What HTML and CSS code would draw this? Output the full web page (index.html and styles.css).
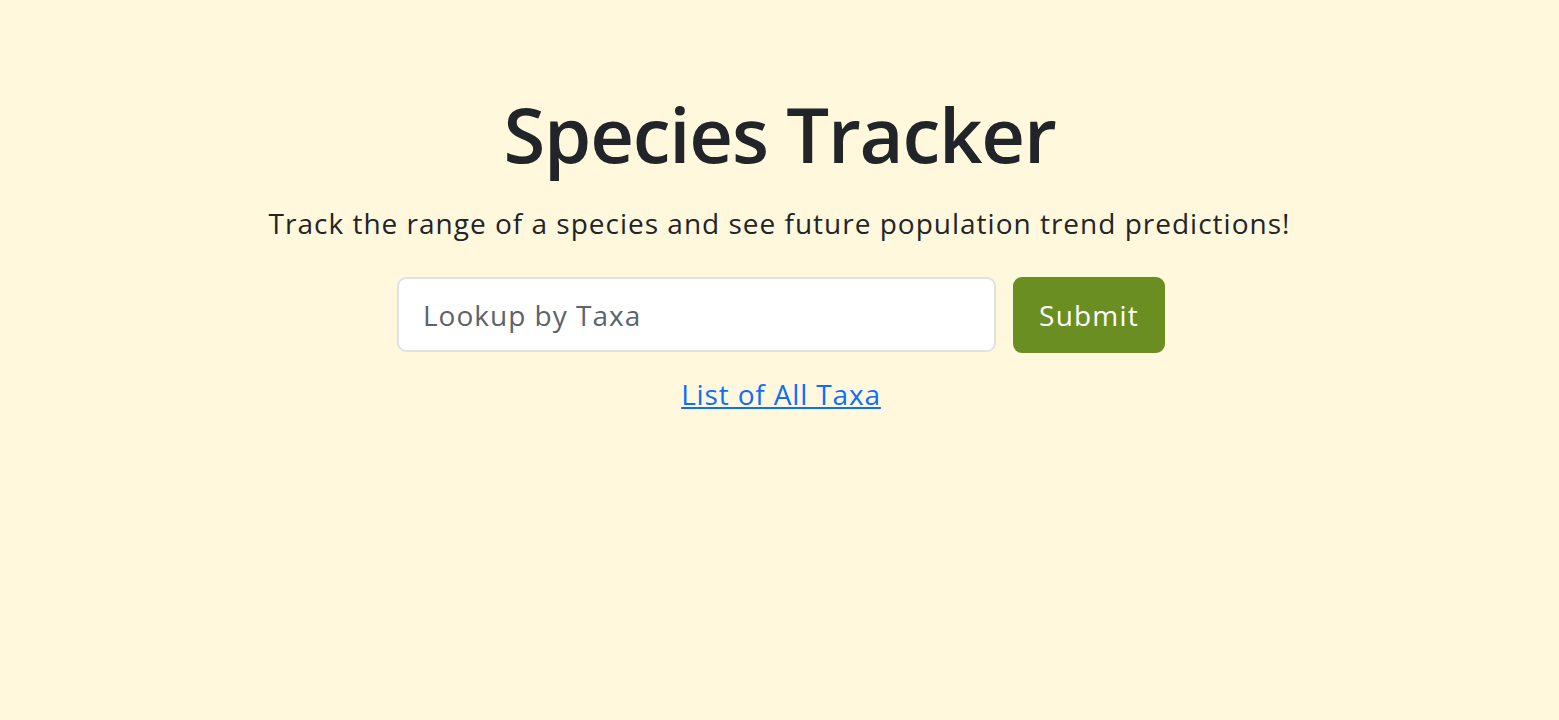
FILE: index.html
```html
<!DOCTYPE html>
<html lang="en">
<head>
<meta charset="utf-8">
<title>Species Tracker</title>
<link rel="stylesheet" href="styles.css">
</head>
<body>
<main class="hero">
  <h1 class="title">Species Tracker</h1>
  <p class="lead">Track the range of a species and see future population trend predictions!</p>
  <form class="search">
    <input class="search-input" type="text" placeholder="Lookup by Taxa">
    <button class="search-btn" type="button">Submit</button>
  </form>
  <a class="all-link" href="#">List of All Taxa</a>
</main>
</body>
</html>
```

FILE: styles.css
```css
html, body {
  margin: 0;
  padding: 0;
  background: #fff8dc;
  height: 100%;
}
body {
  font-family: "Open Sans", "Noto Sans", sans-serif;
  color: #212529;
}
.hero {
  display: flex;
  flex-direction: column;
  align-items: center;
  padding-top: 88px;
}
.title {
  margin: 0;
  font-size: 76px;
  font-weight: 600;
  line-height: 1.2;
  letter-spacing: -1.2px;
}
.lead {
  margin: 23px 0 0;
  font-size: 28px;
  line-height: 1.5;
  letter-spacing: 1px;
}
.search {
  display: flex;
  gap: 17px;
  margin-top: 33px;
  padding-left: 3px;
}
.search-input {
  box-sizing: border-box;
  width: 599px;
  height: 75px;
  padding: 0 24px;
  border: 2px solid #dee2e6;
  border-radius: 9px;
  background: #fff;
  font-family: inherit;
  font-size: 28px;
  color: #212529;
  outline: none;
}
.search-input::placeholder {
  color: #5c636a;
  letter-spacing: 1px;
}
.search-btn {
  box-sizing: border-box;
  width: 152px;
  height: 76px;
  border: none;
  border-radius: 9px;
  background: #6b8e23;
  color: #fff;
  font-family: inherit;
  font-size: 28px;
  letter-spacing: 1.2px;
  cursor: pointer;
}
.all-link {
  margin-top: 22px;
  padding-left: 3px;
  font-size: 28px;
  color: #0d6efd;
  text-decoration: underline;
  letter-spacing: 0.85px;
}
```
